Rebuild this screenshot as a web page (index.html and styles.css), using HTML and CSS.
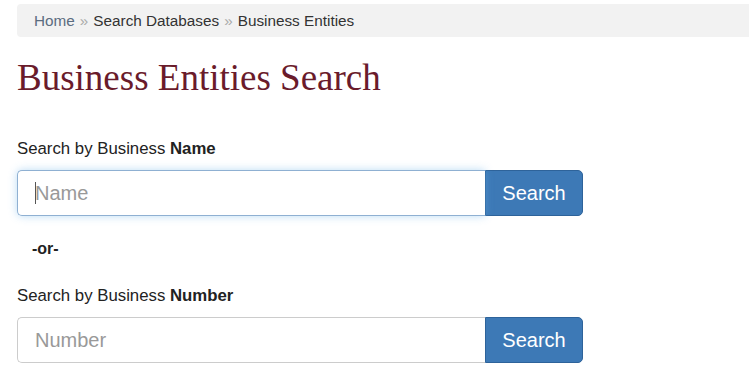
FILE: index.html
```html
<!DOCTYPE html>
<html lang="en">
<head>
  <meta charset="UTF-8" />
  <meta name="viewport" content="width=device-width, initial-scale=1.0"/>
  <title>Business Entities Search</title>
  <link rel="stylesheet" href="styles.css">
</head>
<body>
  <div class="page">
    <ol class="breadcrumb">
      <li><a href="#">Home</a></li>
      <li>Search Databases</li>
      <li>Business Entities</li>
    </ol>

    <h1>Business Entities Search</h1>

    <form class="search-form">
      <label for="bizName">Search by Business <b>Name</b></label>
      <div class="input-group">
        <div class="field">
          <input type="text" id="bizName" class="focused" placeholder="Name" />
          <span class="caret"></span>
        </div>
        <button type="button">Search</button>
      </div>

      <p class="or">-or-</p>

      <label for="bizNumber">Search by Business <b>Number</b></label>
      <div class="input-group">
        <div class="field">
          <input type="text" id="bizNumber" placeholder="Number" />
        </div>
        <button type="button">Search</button>
      </div>
    </form>
  </div>
</body>
</html>
```

FILE: styles.css
```css
* { box-sizing: border-box; margin: 0; padding: 0; }
body {
  font-family: 'Liberation Sans', Arial, sans-serif;
  font-size: 16.8px; color: #222; background: #fff;
  overflow: hidden;
}
.page { padding: 4px 0 0 17px; }

.breadcrumb {
  list-style: none; display: flex; align-items: center;
  height: 33px; padding-left: 17px; font-size: 15.3px;
  background: #f2f2f2; border-radius: 4px 0 0 4px;
  margin-right: -10px;
}
.breadcrumb li { color: #333; }
.breadcrumb li + li::before { content: "\00bb"; color: #aaa; padding: 0 5px; }
.breadcrumb a { color: #5b6c80; text-decoration: none; }

h1 {
  font-family: Georgia, 'Liberation Serif', serif;
  font-weight: normal; font-size: 37px; color: #6a1b2b;
  margin: 19px 0 40px;
}

.search-form { width: 566px; }
.search-form label { display: block; margin-bottom: 11px; }
.search-form label b { font-weight: bold; }

.input-group { display: flex; height: 46px; }
.field { flex: 1; position: relative; display: flex; }
.field input {
  flex: 1; min-width: 0;
  padding: 0 17px; font-family: inherit; font-size: 20px; color: #555;
  border: 1px solid #ccc; border-right: none;
  border-radius: 5px 0 0 5px; outline: none;
}
.field input::placeholder { color: #999; }
.field input.focused {
  border-color: #8fb0d2;
  box-shadow: 0 0 8px rgba(102, 175, 233, 0.45);
}
/* blinking text cursor seen in the screenshot */
.caret {
  position: absolute; left: 18px; top: 12px;
  width: 1px; height: 22px; background: #555;
}
.input-group button {
  width: 98px; background: #3d79b6; color: #fff;
  border: 1px solid #2e639a; border-radius: 0 5px 5px 0;
  font-family: inherit; font-size: 20px; cursor: pointer;
}

.or { font-weight: bold; font-size: 16px; margin: 24px 0 28px 15px; }
```
